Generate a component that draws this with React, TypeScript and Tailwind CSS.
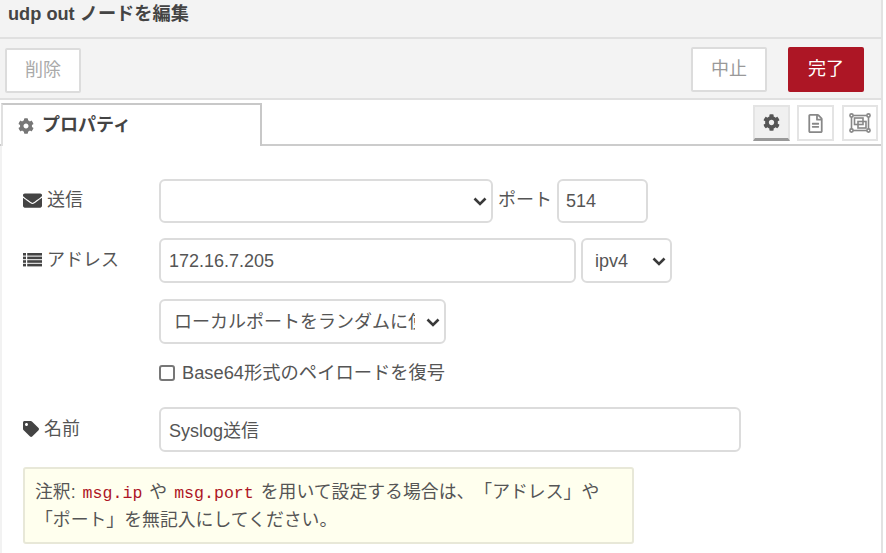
import { FaCog, FaEnvelope, FaTag, FaRegFileAlt } from 'react-icons/fa';

const font = "font-['Liberation_Sans','Noto_Sans_CJK_JP',sans-serif]";

function Chevron() {
    return (
        <svg viewBox="0 0 14 9" className="absolute right-[6px] top-1/2 -mt-[4px] w-[14px] h-[9px] pointer-events-none">
            <path d="M1.5 1.5 L7 7 L12.5 1.5" fill="none" stroke="#3a3a3a" strokeWidth="2.6" />
        </svg>
    );
}

function ListIcon() {
    return (
        <svg viewBox="0 0 19 14" className="w-[19px] h-[14px]" fill="#444">
            {[0, 3.6, 7.2, 10.8].map((y) => (
                <g key={y}>
                    <rect x="0" y={y} width="3" height="2.6" />
                    <rect x="4.2" y={y} width="14.8" height="2.6" />
                </g>
            ))}
        </svg>
    );
}

function ObjectGroupIcon() {
    return (
        <svg viewBox="0 0 22 20" className="w-[22px] h-[20px]" fill="none" stroke="#888" strokeWidth="1.6">
            <rect x="2.5" y="2.5" width="17" height="15" />
            <rect x="5.5" y="5" width="8.5" height="6.5" fill="#fff" />
            <rect x="9" y="8.5" width="8" height="6.5" />
            <circle cx="2.5" cy="2.5" r="1.6" fill="#fff" />
            <circle cx="19.5" cy="2.5" r="1.6" fill="#fff" />
            <circle cx="2.5" cy="17.5" r="1.6" fill="#fff" />
            <circle cx="19.5" cy="17.5" r="1.6" fill="#fff" />
        </svg>
    );
}

export default function App() {
    return (
        <div className={`${font} w-[886px] h-[553px] overflow-hidden bg-white text-[18px] text-[#555]`}>
            <div className="w-[883px] h-full border-r-2 border-r-[#e2e2e2]">
                {/* Title */}
                <div className="h-[39px] bg-[#f3f3f3] border-b-2 border-[#e0e0e0] pl-2 pt-[3px] text-[18.2px] leading-[22px] font-bold text-[#444]">
                    udp out ノードを編集
                </div>

                {/* Action buttons */}
                <div className="h-[61px] bg-[#f3f3f3] border-b-2 border-[#e0e0e0] flex items-start pt-[8px] pl-[5px] pr-[17px]">
                    <button className="w-[76px] h-[45px] mt-[1px] bg-white border-2 border-[#dcdcdc] rounded-[2px] text-[#aaa]">削除</button>
                    <button className="w-[76px] h-[45px] ml-auto bg-white border-2 border-[#dcdcdc] rounded-[2px] text-[#999]">中止</button>
                    <button className="w-[76px] h-[45px] ml-[21px] bg-[#ad1625] border-2 border-[#ad1625] rounded-[2px] text-white">完了</button>
                </div>

                {/* Tabs */}
                <div className="h-[46px] flex items-end border-b-2 border-[#ccc] pl-[1px]">
                    <div className="w-[261px] h-[43px] -mb-[2px] bg-white border-t-2 border-x-2 border-[#c8c8c8] border-l-[#e0e0e0] flex items-center pl-[15px] gap-[8px] font-bold text-[#444]">
                        <FaCog className="text-[16px] text-[#777]" />
                        <span>プロパティ</span>
                    </div>
                    <div className="ml-auto flex pr-[3px] pb-[3px]">
                        <div className="w-[37px] h-[36px] bg-[#f0f0f0] border-2 border-[#e4e4e4] border-b-[3px] border-b-[#999] flex items-center justify-center text-[#555]">
                            <FaCog className="text-[17px]" />
                        </div>
                        <div className="w-[37px] h-[36px] ml-[7px] bg-white border-2 border-[#e4e4e4] flex items-center justify-center text-[#888]">
                            <FaRegFileAlt className="text-[19px]" />
                        </div>
                        <div className="w-[36px] h-[36px] ml-[8px] bg-white border-2 border-[#e4e4e4] flex items-center justify-center">
                            <ObjectGroupIcon />
                        </div>
                    </div>
                </div>

                {/* Form */}
                <div className="h-[407px] border-l-2 border-l-[#f2f2f2] pt-[33px] pl-[21px]">
                    <div className="flex items-start h-[44px]">
                        <label className="w-[136px] flex items-center gap-[5px] pt-[10px] leading-[22px]">
                            <FaEnvelope className="text-[19px] text-[#444]" />
                            <span>送信</span>
                        </label>
                        <div className="relative w-[334px] h-[44px]">
                            <select className="appearance-none w-full h-full bg-white border-2 border-[#dcdcdc] rounded-[6px] pl-[12px] text-[18px] text-[#555]">
                                <option></option>
                            </select>
                            <Chevron />
                        </div>
                        <span className="ml-[5px] pt-[10px] leading-[22px]">ポート</span>
                        <input readOnly value="514" className="ml-[5px] w-[91px] h-[44px] border-2 border-[#dcdcdc] rounded-[6px] px-[7px] text-[#555] outline-none" />
                    </div>

                    <div className="flex items-start h-[45px] mt-[15px]">
                        <label className="w-[136px] flex items-center gap-[5px] pt-[11px] leading-[22px]">
                            <ListIcon />
                            <span>アドレス</span>
                        </label>
                        <input readOnly value="172.16.7.205" className="w-[417px] h-[45px] border-2 border-[#dcdcdc] rounded-[6px] px-[8px] pt-[2px] text-[#555] outline-none" />
                        <div className="relative ml-[5px] w-[91px] h-[45px]">
                            <select className="appearance-none w-full h-full bg-white border-2 border-[#dcdcdc] rounded-[6px] pl-[12px] pt-[2px] text-[18px] text-[#555]">
                                <option>ipv4</option>
                            </select>
                            <Chevron />
                        </div>
                    </div>

                    <div className="pl-[136px] mt-[16px]">
                        <div className="relative w-[287px] h-[45px]">
                            <select className="appearance-none w-full h-full bg-white border-2 border-[#dcdcdc] rounded-[6px] pl-[13px] pr-[29px] pt-[2px] text-[18px] text-[#555]">
                                <option>ローカルポートをランダムに使用</option>
                            </select>
                            <Chevron />
                        </div>
                    </div>

                    <div className="pl-[136px] mt-[17px] h-[24px] flex items-center gap-[7px]">
                        <span className="w-[16px] h-[16px] border-2 border-[#777] rounded-[3px] bg-white"></span>
                        <span className="text-[18.3px]">Base64形式のペイロードを復号</span>
                    </div>

                    <div className="flex items-start h-[45px] mt-[22px]">
                        <label className="w-[136px] flex items-center gap-[5px] pt-[11px] leading-[22px]">
                            <FaTag className="text-[16px] text-[#444]" />
                            <span>名前</span>
                        </label>
                        <input readOnly value="Syslog送信" className="w-[582px] h-[45px] border-2 border-[#dcdcdc] rounded-[6px] px-[8px] pb-[2px] text-[#555] outline-none" />
                    </div>

                    {/* Note */}
                    <div className="mt-[15px] w-[611px] h-[77px] bg-[#ffffee] border-2 border-[#e8e8d8] rounded-[3px] pl-[10px] pt-[10px] text-[17.85px] leading-[27px] text-[#555] [text-spacing-trim:space-all]">
                        <div className="whitespace-nowrap">
                            注釈: <code className="ml-[2px] mr-[2px] font-['Liberation_Mono',monospace] text-[16.6px] text-[#ad1625]">msg.ip</code> や <code className="ml-[2px] mr-[2px] font-['Liberation_Mono',monospace] text-[16.6px] text-[#ad1625]">msg.port</code> を用いて設定する場合は、「アドレス」や
                        </div>
                        <div className="whitespace-nowrap">「ポート」を無記入にしてください。</div>
                    </div>
                </div>
            </div>
        </div>
    );
}
